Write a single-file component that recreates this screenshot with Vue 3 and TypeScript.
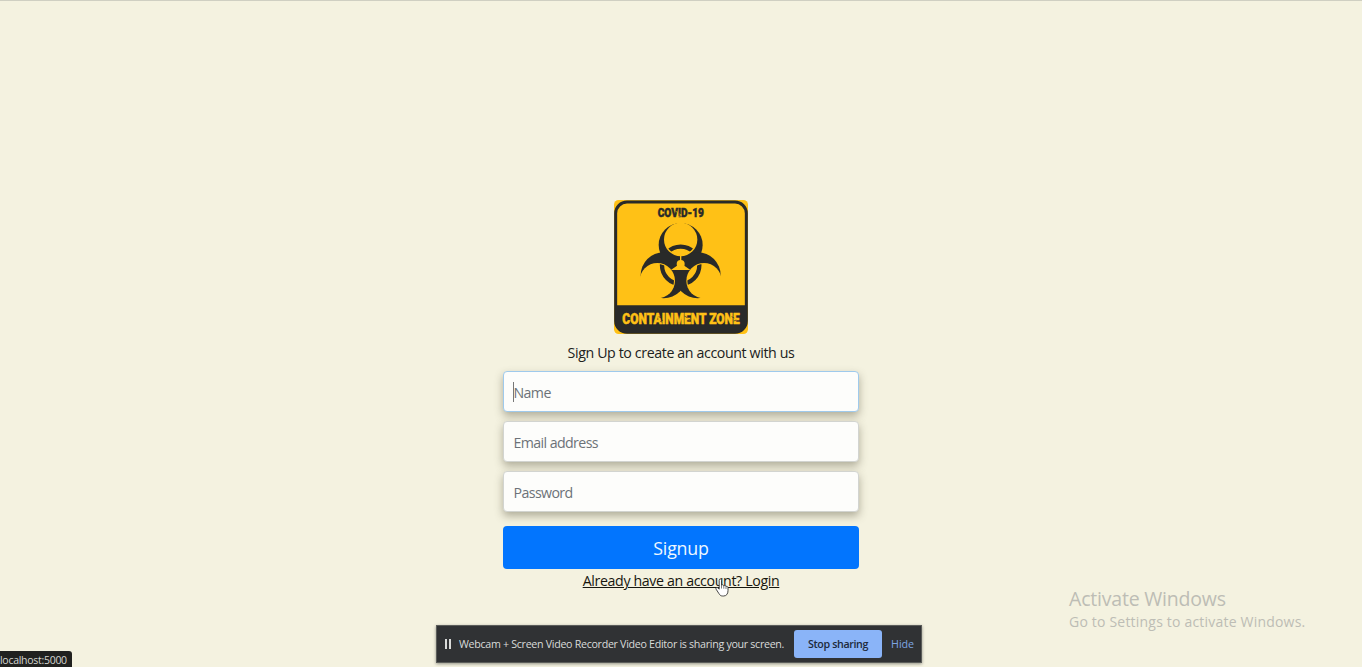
<script setup lang="ts">
import { ref } from 'vue'

interface Field {
  id: string
  type: string
  label: string
  active: boolean
}

const fields: Field[] = [
  { id: 'name', type: 'text', label: 'Name', active: true },
  { id: 'email', type: 'email', label: 'Email address', active: false },
  { id: 'password', type: 'password', label: 'Password', active: false },
]
const values = ref<Record<string, string>>({ name: '', email: '', password: '' })
</script>

<template>
  <main class="page">
    <form class="signup" @submit.prevent>
      <svg class="logo" viewBox="30 30 402 402" aria-label="Containment zone">
        <defs>
          <mask id="lobes">
            <rect x="30" y="30" width="402" height="402" fill="#fff" />
            <g fill="#000">
              <circle cx="230" cy="148.5" r="50" />
              <circle cx="160" cy="272" r="53" />
              <circle cx="300" cy="272" r="53" />
              <circle cx="230" cy="222" r="12" />
            </g>
            <path d="M230 222V192M230 222L207 238H253Z" stroke="#000" stroke-width="4" />
          </mask>
          <clipPath id="holes">
            <circle cx="230" cy="148.5" r="46" />
            <circle cx="160" cy="272" r="50" />
            <circle cx="300" cy="272" r="50" />
          </clipPath>
        </defs>
        <rect x="30" y="30" width="402" height="402" rx="14" fill="#ffc116" />
        <rect x="35" y="36" width="392" height="391" rx="34" fill="none" stroke="#292a29" stroke-width="9" />
        <path d="M35 346H427V393Q427 428 393 428H69Q35 428 35 393Z" fill="#292a29" />
        <g mask="url(#lobes)" fill="#292a29">
          <circle cx="230" cy="165" r="66" />
          <circle cx="179" cy="256" r="69" />
          <circle cx="281" cy="256" r="69" />
        </g>
        <circle cx="230" cy="226" r="56" fill="none" stroke="#292a29" stroke-width="13" clip-path="url(#holes)" />
        <text class="stencil" x="161" y="82" font-size="40" textLength="139" lengthAdjust="spacingAndGlyphs" fill="#292a29" stroke="#292a29">COVID-19</text>
        <text class="stencil" x="55" y="401" font-size="45" textLength="352" lengthAdjust="spacingAndGlyphs" fill="#ffc116" stroke="#ffc116">CONTAINMENT ZONE</text>
        <path d="M215 64l6 3M226 72l8 4M222 80l9-3" stroke="#ffc116" stroke-width="2" />
        <path d="M164 380l10 4M169 395l8-5M241 378l9 5M250 391l10-4M383 380l8 4M389 393l8-3" stroke="#292a29" stroke-width="2" />
      </svg>
      <p class="intro">Sign Up to create an account with us</p>
      <div class="fields">
        <label v-for="f in fields" :key="f.id" class="field" :class="{ active: f.active }">
          <span v-if="f.active" class="caret"></span>
          <input :id="f.id" v-model="values[f.id]" :type="f.type" :placeholder="f.label" />
        </label>
      </div>
      <button class="submit" type="submit"><span>Signup</span></button>
      <a class="login">Already have an account? Login</a>
    </form>

    <svg class="pointer" viewBox="0 0 14 19">
      <path d="M4.2 11.2V2.3C4.2.4 6.5.4 6.5 2.3V7.2C7.2 6.4 8.6 6.7 8.8 7.8C9.5 7.1 10.8 7.4 11 8.5C11.8 8 13 8.5 13 9.7V12.6C13 15.9 11.4 18 8.6 18H7.6C5.6 18 4.8 17 3.8 15.4L1.1 11.2C.3 9.8 1.9 8.9 2.9 9.9Z" fill="#fff" stroke="#333" stroke-width=".9" />
      <path d="M6.5 7.2V10.5M8.8 7.8V10.7M11 8.5V11" stroke="#444" stroke-width=".7" />
    </svg>

    <aside class="watermark">
      <div class="watermark-title">Activate Windows</div>
      <div class="watermark-sub">Go to Settings to activate Windows.</div>
    </aside>

    <section class="share">
      <i class="pause"></i>
      <span class="share-text">Webcam + Screen Video Recorder Video Editor is sharing your screen.</span>
      <button class="stop" type="button"><span>Stop sharing</span></button>
      <a class="hide">Hide</a>
    </section>

    <div class="status">localhost:5000</div>
  </main>
</template>

<style>
body {
  margin: 0;
  background: #f4f2e0;
}
</style>

<style scoped>
.page {
  position: relative;
  box-sizing: border-box;
  height: 667px;
  padding-top: 199px;
  overflow: hidden;
  border-top: 1px solid #cfcfc2;
  background: #f4f2e0;
  font-family: "Open Sans", "Noto Sans", sans-serif;
}
.signup {
  display: flex;
  flex-direction: column;
  align-items: center;
  width: 356px;
  margin: 0 auto;
}
.logo {
  display: block;
  width: 134px;
  height: 134px;
  overflow: visible;
}
.stencil {
  font-family: Roboto, "Liberation Sans", sans-serif;
  font-weight: 900;
  stroke-width: 1.6px;
}
.intro {
  margin: 8px 0 7px;
  font-size: 14.2px;
  line-height: 22px;
  letter-spacing: -0.38px;
  white-space: nowrap;
  color: #20211c;
}
.fields {
  display: flex;
  flex-direction: column;
  gap: 9px;
  width: 100%;
}
.field {
  position: relative;
  box-sizing: border-box;
  display: flex;
  height: 41px;
  padding: 0 9.5px;
  border: 1px solid #d2d4d0;
  border-radius: 4px;
  background: #fdfdfb;
  box-shadow: 0 4px 8px rgba(80, 76, 55, 0.42);
}
.field.active {
  border-color: #9fcaec;
}
.field input {
  width: 100%;
  min-width: 0;
  padding: 2px 0 0;
  border: 0;
  outline: 0;
  background: transparent;
  font: 14.2px "Open Sans", "Noto Sans", sans-serif;
  letter-spacing: -0.6px;
}
.field input::placeholder {
  color: #6c7278;
  opacity: 1;
}
.caret {
  position: absolute;
  left: 9px;
  top: 10px;
  width: 1px;
  height: 20px;
  background: #777;
}
.submit {
  width: 100%;
  height: 43px;
  margin-top: 14px;
  padding: 0;
  border: 0;
  border-radius: 4px;
  background: #0275fe;
  color: #eff8ff;
  font: 17.8px "Open Sans", "Noto Sans", sans-serif;
  letter-spacing: -0.2px;
}
.login {
  margin-top: 1px;
  font-size: 14.2px;
  line-height: 22px;
  letter-spacing: -0.36px;
  white-space: nowrap;
  text-decoration: underline;
  color: #17170f;
}
.pointer {
  position: absolute;
  left: 715px;
  top: 577px;
  width: 14px;
  height: 19px;
}
.watermark {
  position: absolute;
  left: 1069px;
  top: 585px;
  white-space: nowrap;
  color: #bdbdb5;
}
.watermark-title {
  font-size: 19.5px;
  line-height: 26px;
  letter-spacing: -0.2px;
}
.watermark-sub {
  font-size: 14px;
  line-height: 20px;
  letter-spacing: 0.2px;
}
.share {
  position: absolute;
  left: 436px;
  top: 624px;
  box-sizing: border-box;
  display: flex;
  align-items: center;
  width: 486px;
  height: 38px;
  padding-left: 8px;
  border: 1px solid #5b5d5a;
  background: #303234;
  box-shadow: 0 1px 3px rgba(0, 0, 0, 0.4);
  white-space: nowrap;
  color: #d9dbd9;
  font-size: 10.7px;
}
.pause {
  flex: none;
  box-sizing: border-box;
  width: 6px;
  height: 10px;
  border: solid #d9dbd9;
  border-width: 0 2px;
}
.share-text {
  flex: none;
  width: 326px;
  margin-left: 8px;
  letter-spacing: -0.31px;
}
.stop {
  flex: none;
  width: 88px;
  height: 28px;
  margin-left: 9px;
  padding: 0;
  border: 0;
  border-radius: 3px;
  background: #8ab4f8;
  color: #202a3b;
  font: 600 10.7px "Open Sans", "Noto Sans", sans-serif;
  letter-spacing: -0.37px;
}
.hide {
  margin-left: 9px;
  color: #7da5e2;
}
.status {
  position: absolute;
  left: 0;
  bottom: 0;
  box-sizing: border-box;
  width: 72px;
  height: 16px;
  border-radius: 0 3px 0 0;
  background: #20211f;
  color: #d5d5d0;
  font-size: 10.5px;
  line-height: 18px;
  letter-spacing: -0.28px;
  white-space: nowrap;
}
</style>
